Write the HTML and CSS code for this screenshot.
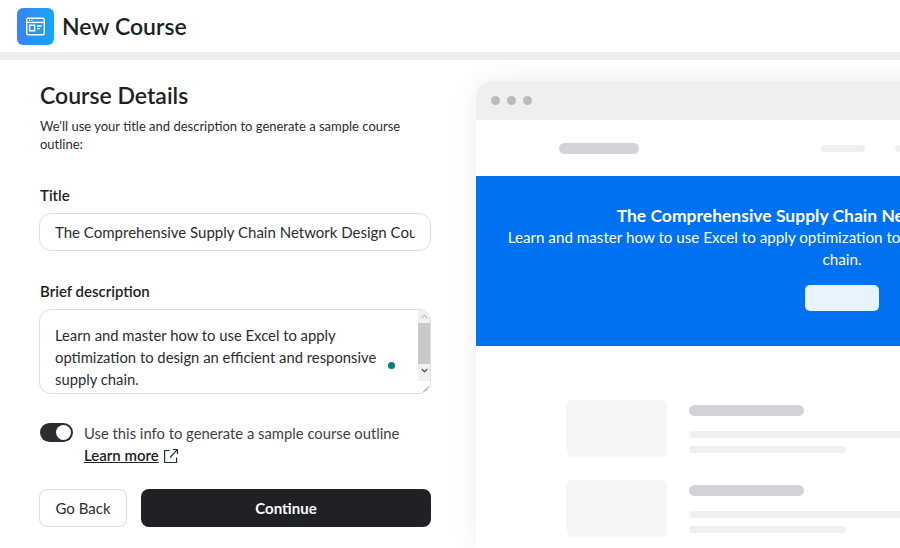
FILE: index.html
```html
<!DOCTYPE html>
<html lang="en">
    <head>
        <meta charset="UTF-8" />
        <meta name="viewport" content="width=device-width, initial-scale=1.0" />
        <title>New Course</title>
        <link rel="stylesheet" href="styles.css">
    </head>
    <body>
        <!-- Top bar -->
        <header class="topbar">
            <div class="logo">
                <svg width="21" height="21" viewBox="0 0 21 21" fill="none" stroke="#fff" stroke-width="1.4">
                    <rect x="1.7" y="2.2" width="17.6" height="16.6" rx="1.5" />
                    <path d="M1.7 6.4h17.6" />
                    <path d="M4 4.3h1M6.4 4.3h1" />
                    <rect x="4.6" y="9.2" width="5" height="5.6" />
                    <path d="M12 10h4.6M12 12.6h3" />
                </svg>
            </div>
            <h1 class="page-title">New Course</h1>
        </header>

        <main class="content">
            <!-- Form column -->
            <section class="details">
                <h2 class="details-title">Course Details</h2>
                <p class="details-intro">We'll use your title and description to generate a sample course outline:</p>

                <label class="field-label">Title</label>
                <div class="title-input">
                    <span class="title-text">The Comprehensive Supply Chain Network Design Course</span>
                </div>

                <label class="field-label field-label-desc">Brief description</label>
                <div class="desc-input">
                    <div class="desc-text">Learn and master how to use Excel to apply optimization to design an efficient and responsive supply chain.</div>
                    <div class="scrollbar">
                        <span class="scroll-btn">
                            <svg width="7" height="5" viewBox="0 0 7 5" fill="none" stroke="#c4c4c4" stroke-width="1.3"><path d="M.7 4l2.8-2.8L6.3 4" /></svg>
                        </span>
                        <span class="scroll-thumb"></span>
                        <span class="scroll-btn">
                            <svg width="7" height="5" viewBox="0 0 7 5" fill="none" stroke="#555" stroke-width="1.3"><path d="M.7 1l2.8 2.8L6.3 1" /></svg>
                        </span>
                        <span class="scroll-grip">
                            <svg width="8" height="8" viewBox="0 0 8 8" fill="none" stroke="#777" stroke-width="1"><path d="M1 7.5L7.5 1M4.5 7.5l3-3" /></svg>
                        </span>
                    </div>
                    <span class="status-dot"></span>
                </div>

                <div class="toggle-row">
                    <span class="toggle"><span class="toggle-knob"></span></span>
                    <div class="toggle-text">
                        Use this info to generate a sample course outline<br>
                        <a class="learn-more" href="#">Learn more</a>
                        <svg class="ext-icon" width="16" height="16" viewBox="0 0 16 16" fill="none" stroke="#2a2d31" stroke-width="1.2">
                            <path d="M6.5 2.5H1.6v12h12V9.5" />
                            <path d="M7 9.5L14.3 1.7M9.8 1.5h4.7v4.7" />
                        </svg>
                    </div>
                </div>

                <div class="actions">
                    <button class="btn btn-back">Go Back</button>
                    <button class="btn btn-continue">Continue</button>
                </div>
            </section>

            <!-- Preview of the course page -->
            <section class="preview">
                <div class="preview-chrome">
                    <span class="chrome-dot"></span>
                    <span class="chrome-dot"></span>
                    <span class="chrome-dot"></span>
                </div>
                <div class="preview-nav">
                    <span class="nav-logo"></span>
                    <span class="nav-link"></span>
                    <span class="nav-link"></span>
                </div>
                <div class="preview-hero">
                    <div class="hero-title">The Comprehensive Supply Chain Network Design Course</div>
                    <div class="hero-desc">Learn and master how to use Excel to apply optimization to design an efficient and responsive supply chain.</div>
                    <span class="hero-btn"></span>
                </div>
                <div class="preview-list">
                    <div class="lesson">
                        <span class="lesson-thumb"></span>
                        <div class="lesson-lines">
                            <span class="line-title"></span>
                            <span class="line-long"></span>
                            <span class="line-short"></span>
                        </div>
                    </div>
                    <div class="lesson">
                        <span class="lesson-thumb"></span>
                        <div class="lesson-lines">
                            <span class="line-title"></span>
                            <span class="line-long"></span>
                            <span class="line-short"></span>
                        </div>
                    </div>
                </div>
            </section>
        </main>
    </body>
</html>
```

FILE: styles.css
```css
body {
    font-family: Lato, "Liberation Sans", sans-serif;
    margin: 0;
    padding: 0;
    width: 900px;
    height: 548px;
    overflow: hidden;
    background-color: #fff;
    color: #1f2125;
}

.topbar {
    display: flex;
    align-items: center;
    gap: 8px;
    height: 52px;
    padding-left: 17px;
    border-bottom: 8px solid #eeeff0;
}

.logo {
    display: flex;
    align-items: center;
    justify-content: center;
    width: 37px;
    height: 37px;
    border-radius: 6px;
    background: linear-gradient(90deg, #3b82f2, #12a8fb);
}

.page-title {
    margin: 0;
    font-size: 23px;
    font-weight: 600;
    color: #1c1f23;
}

.content {
    display: flex;
    height: 488px;
}

.details {
    flex: 0 0 476px;
    min-width: 0;
    box-sizing: border-box;
    padding: 20px 45px 0 39px;
}

.details-title {
    margin: 0 0 0 1px;
    font-size: 23px;
    line-height: 30px;
    font-weight: 600;
}

.details-intro {
    margin: 7px 0 0 1px;
    font-size: 13px;
    line-height: 18px;
    color: #2a2d31;
}

.field-label {
    display: block;
    margin: 32px 0 8px 1px;
    font-size: 15px;
    line-height: 20px;
    font-weight: 600;
}

.field-label-desc {
    margin-top: 30px;
}

.title-input {
    box-sizing: border-box;
    height: 38px;
    padding: 0 15px;
    border: 1px solid #dcdde0;
    border-radius: 12px;
    line-height: 36px;
    font-size: 15px;
    color: #2a2d31;
}

.title-text {
    display: block;
    white-space: nowrap;
    overflow: hidden;
}

.desc-input {
    position: relative;
    display: flex;
    box-sizing: border-box;
    height: 85px;
    border: 1px solid #dcdde0;
    border-radius: 12px;
    overflow: hidden;
}

.desc-text {
    flex: 1;
    padding: 14px 20px 0 15px;
    font-size: 14.8px;
    line-height: 22px;
    color: #2a2d31;
}

.scrollbar {
    display: flex;
    flex-direction: column;
    flex: 0 0 12px;
    background-color: #f1f1f1;
}

.scroll-btn {
    display: flex;
    align-items: center;
    justify-content: center;
    height: 13px;
}

.scroll-thumb {
    height: 41px;
    background-color: #c9c9c9;
}

.scroll-grip {
    display: flex;
    align-items: flex-end;
    justify-content: flex-end;
    height: 12px;
    margin-top: 4px;
    background-color: #fff;
}

/* Grammar checker dot that sits over the text box */
.status-dot {
    position: absolute;
    top: 52px;
    left: 348px;
    width: 7px;
    height: 7px;
    border-radius: 50%;
    background-color: #087f73;
}

.toggle-row {
    display: flex;
    gap: 11px;
    margin: 29px 0 0 1px;
}

.toggle {
    display: flex;
    align-items: center;
    justify-content: flex-end;
    box-sizing: border-box;
    width: 33px;
    height: 19px;
    padding-right: 2px;
    border-radius: 10px;
    background-color: #2a2d31;
}

.toggle-knob {
    width: 15px;
    height: 15px;
    border-radius: 50%;
    background-color: #fff;
}

.toggle-text {
    margin-top: -1px;
    font-size: 14.8px;
    line-height: 22px;
    color: #3d4145;
}

.learn-more {
    font-size: 15px;
    font-weight: 600;
    color: #1f2125;
}

.ext-icon {
    vertical-align: -3px;
}

.actions {
    display: flex;
    gap: 14px;
    margin-top: 23px;
}

.btn {
    height: 38px;
    border-radius: 8px;
    font-family: inherit;
    font-size: 15px;
}

.btn-back {
    width: 88px;
    border: 1px solid #dcdde0;
    background-color: #fff;
    color: #2a2d31;
}

.btn-continue {
    flex: 1;
    border: 0;
    background-color: #1f2125;
    color: #fff;
    font-weight: 700;
}

.preview {
    flex: 0 0 732px;
    margin: 21px 0 0 0;
    border-radius: 16px 16px 0 0;
    background-color: #fff;
    box-shadow: 0 0 30px rgba(0, 0, 0, 0.07);
}

.preview-chrome {
    display: flex;
    align-items: center;
    gap: 7px;
    height: 39px;
    padding-left: 15px;
    border-radius: 16px 16px 0 0;
    background-color: #eeeff0;
}

.chrome-dot {
    width: 9px;
    height: 9px;
    border-radius: 50%;
    background-color: #b8bbbd;
}

.preview-nav {
    display: flex;
    align-items: center;
    height: 56px;
    padding-left: 83px;
}

.nav-logo {
    width: 80px;
    height: 11px;
    border-radius: 6px;
    background-color: #d2d3d7;
}

.nav-link {
    width: 44px;
    height: 7px;
    margin-left: 30px;
    border-radius: 4px;
    background-color: #eeeff0;
}

.nav-logo + .nav-link {
    margin-left: 182px;
}

.preview-hero {
    display: flex;
    flex-direction: column;
    align-items: center;
    height: 170px;
    padding: 30px 24px 0;
    box-sizing: border-box;
    background-color: #0071f0;
    color: #fff;
    text-align: center;
}

.hero-title {
    font-size: 17.5px;
    line-height: 20px;
    font-weight: 700;
}

.hero-desc {
    font-size: 15.2px;
    line-height: 22px;
}

.hero-btn {
    width: 74px;
    height: 26px;
    margin-top: 15px;
    border-radius: 5px;
    background-color: #e7f3fd;
}

.preview-list {
    display: flex;
    flex-direction: column;
    gap: 23px;
    padding: 54px 0 0 90px;
}

.lesson {
    display: flex;
    gap: 22px;
}

.lesson-thumb {
    flex: 0 0 101px;
    height: 57px;
    border-radius: 6px;
    background-color: #f5f7f6;
}

.lesson-lines {
    display: flex;
    flex-direction: column;
    padding-top: 5px;
}

.line-title {
    width: 115px;
    height: 11px;
    border-radius: 6px;
    background-color: #d2d3d7;
}

.line-long {
    width: 400px;
    height: 7px;
    margin-top: 15px;
    border-radius: 4px;
    background-color: #eeeff0;
}

.line-short {
    width: 157px;
    height: 7px;
    margin-top: 8px;
    border-radius: 4px;
    background-color: #eeeff0;
}
```
